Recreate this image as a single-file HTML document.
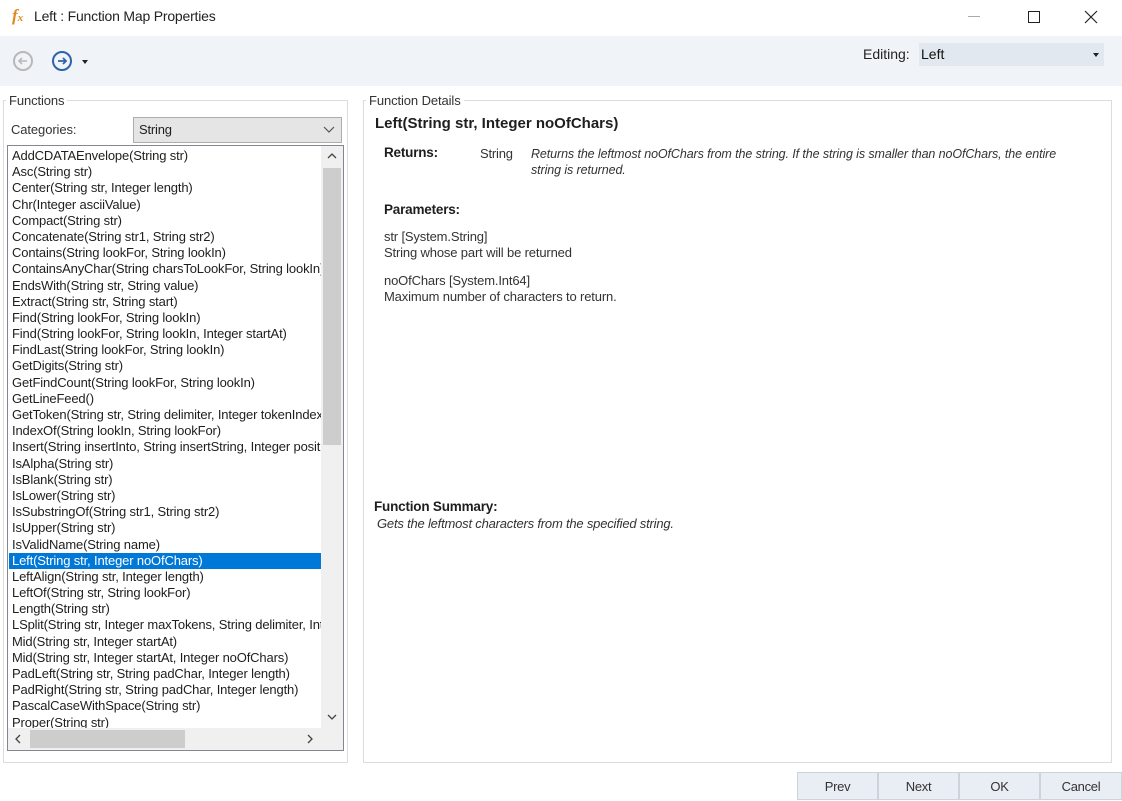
<!DOCTYPE html>
<html><head><meta charset="utf-8"><style>
*{margin:0;padding:0;box-sizing:border-box}
body{width:1122px;height:799px;background:#fff;font-family:"Liberation Sans",sans-serif;font-size:12px;color:#1e1e1e;position:relative;overflow:hidden}
.abs{position:absolute}
.grp{position:absolute;border:1px solid #dcdcdc}
.lbl{position:absolute;background:#fff;padding:0 3px;color:#333;font-size:13px;letter-spacing:-.1px}
.list div{height:16.2px;line-height:16px;padding-left:3px;white-space:nowrap;letter-spacing:-.15px;font-size:13px}
.sel{background:#0078d7;color:#fff;width:312px}
.btn{position:absolute;top:772px;height:28px;width:81px;background:#e9eef4;border:1px solid #ccd3db;text-align:center;line-height:28px;font-size:13px;color:#333;letter-spacing:-.3px}
</style></head><body>
<div class="abs" style="left:12px;top:6px;font-family:'Liberation Serif',serif;font-style:italic;font-weight:bold;color:#e08a1e;font-size:17px">f<span style="font-size:11px">x</span></div>
<div class="abs" style="left:34px;top:8px;font-size:14px;color:#222;letter-spacing:-.2px">Left : Function Map Properties</div>
<div class="abs" style="left:968px;top:16px;width:12px;height:1px;background:#aaa"></div>
<div class="abs" style="left:1028px;top:11px;width:12px;height:12px;border:1px solid #222"></div>
<svg class="abs" style="left:1084px;top:10px" width="14" height="14"><path d="M1 1L13 13M13 1L1 13" stroke="#222" stroke-width="1.2"/></svg>
<div class="abs" style="left:0;top:36px;width:1122px;height:50px;background:#f0f4f8"></div>
<svg class="abs" style="left:12px;top:50px" width="22" height="22"><circle cx="11" cy="11" r="9" fill="none" stroke="#b8b8b8" stroke-width="2"/><path d="M15 11H7M10 8L7 11L10 14" fill="none" stroke="#b8b8b8" stroke-width="1.6"/></svg>
<svg class="abs" style="left:51px;top:50px" width="22" height="22"><circle cx="11" cy="11" r="9" fill="none" stroke="#2f62a8" stroke-width="2"/><path d="M7 11H15M12 8L15 11L12 14" fill="none" stroke="#2f62a8" stroke-width="1.8"/></svg>
<div class="abs" style="left:82px;top:60px;border:3px solid transparent;border-top:4px solid #222"></div>
<div class="abs" style="left:863px;top:46px;font-size:14px;color:#222">Editing:</div>
<div class="abs" style="left:919px;top:43px;width:185px;height:23px;background:#e1e8f0;font-size:14px;line-height:22px;padding-left:2px;color:#111">Left</div>
<div class="abs" style="left:1093px;top:53px;border:3px solid transparent;border-top:4px solid #222"></div>

<div class="grp" style="left:3px;top:100px;width:345px;height:663px"></div>
<div class="lbl" style="left:6px;top:93px">Functions</div>
<div class="abs" style="left:11px;top:122px;font-size:13px;color:#333;letter-spacing:-.1px">Categories:</div>
<div class="abs" style="left:133px;top:117px;width:209px;height:26px;background:#e5e5e5;border:1px solid #adadad;font-size:13px;line-height:24px;padding-left:5px;letter-spacing:-.2px">String</div>
<svg class="abs" style="left:323px;top:126px" width="12" height="8"><path d="M1 1L6 6L11 1" fill="none" stroke="#555" stroke-width="1.2"/></svg>
<div class="abs" style="left:7px;top:145px;width:337px;height:606px;border:1px solid #828790;background:#fff;overflow:hidden">
<div class="list abs" style="left:1px;top:2px;width:312px;height:580px;overflow:hidden">
<div>AddCDATAEnvelope(String str)</div><div>Asc(String str)</div><div>Center(String str, Integer length)</div><div>Chr(Integer asciiValue)</div><div>Compact(String str)</div><div>Concatenate(String str1, String str2)</div><div>Contains(String lookFor, String lookIn)</div><div>ContainsAnyChar(String charsToLookFor, String lookIn)</div><div>EndsWith(String str, String value)</div><div>Extract(String str, String start)</div><div>Find(String lookFor, String lookIn)</div><div>Find(String lookFor, String lookIn, Integer startAt)</div><div>FindLast(String lookFor, String lookIn)</div><div>GetDigits(String str)</div><div>GetFindCount(String lookFor, String lookIn)</div><div>GetLineFeed()</div><div>GetToken(String str, String delimiter, Integer tokenIndex)</div><div>IndexOf(String lookIn, String lookFor)</div><div>Insert(String insertInto, String insertString, Integer position)</div><div>IsAlpha(String str)</div><div>IsBlank(String str)</div><div>IsLower(String str)</div><div>IsSubstringOf(String str1, String str2)</div><div>IsUpper(String str)</div><div>IsValidName(String name)</div><div class="sel">Left(String str, Integer noOfChars)</div><div>LeftAlign(String str, Integer length)</div><div>LeftOf(String str, String lookFor)</div><div>Length(String str)</div><div>LSplit(String str, Integer maxTokens, String delimiter, Integer)</div><div>Mid(String str, Integer startAt)</div><div>Mid(String str, Integer startAt, Integer noOfChars)</div><div>PadLeft(String str, String padChar, Integer length)</div><div>PadRight(String str, String padChar, Integer length)</div><div>PascalCaseWithSpace(String str)</div><div>Proper(String str)</div>
</div>
<div class="abs" style="left:313px;top:0;width:22px;height:582px;background:#f0f0f0"></div>
<div class="abs" style="left:315px;top:22px;width:18px;height:277px;background:#cdcdcd"></div>
<svg class="abs" style="left:319px;top:7px" width="10" height="6"><path d="M1 5L5 1L9 5" fill="none" stroke="#444" stroke-width="1.3"/></svg>
<svg class="abs" style="left:319px;top:568px" width="10" height="6"><path d="M1 1L5 5L9 1" fill="none" stroke="#444" stroke-width="1.3"/></svg>
<div class="abs" style="left:0;top:582px;width:335px;height:22px;background:#f0f0f0"></div>
<div class="abs" style="left:22px;top:584px;width:155px;height:18px;background:#cdcdcd"></div>
<svg class="abs" style="left:7px;top:588px" width="6" height="10"><path d="M5 1L1 5L5 9" fill="none" stroke="#444" stroke-width="1.3"/></svg>
<svg class="abs" style="left:299px;top:588px" width="6" height="10"><path d="M1 1L5 5L1 9" fill="none" stroke="#444" stroke-width="1.3"/></svg>
</div>

<div class="grp" style="left:363px;top:100px;width:749px;height:663px"></div>
<div class="lbl" style="left:366px;top:93px">Function Details</div>
<div class="abs" style="left:375px;top:115px;font-weight:bold;font-size:15px;letter-spacing:0">Left(String str, Integer noOfChars)</div>
<div class="abs" style="left:384px;top:145px;font-weight:bold;font-size:13.5px;letter-spacing:-.2px">Returns:</div>
<div class="abs" style="left:480px;top:146px;font-size:13px;color:#333;letter-spacing:-.2px">String</div>
<div class="abs" style="left:531px;top:146px;width:562px;font-style:italic;font-size:12.5px;line-height:16px;color:#333;letter-spacing:-.1px">Returns the leftmost noOfChars from the string. If the string is smaller than noOfChars, the entire<br>string is returned.</div>
<div class="abs" style="left:384px;top:202px;font-weight:bold;font-size:13.5px;letter-spacing:-.2px">Parameters:</div>
<div class="abs" style="left:384px;top:229px;font-size:13px;line-height:16px;color:#333;letter-spacing:-.15px">str [System.String]<br>String whose part will be returned</div>
<div class="abs" style="left:384px;top:273px;font-size:13px;line-height:16px;color:#333;letter-spacing:-.15px">noOfChars [System.Int64]<br>Maximum number of characters to return.</div>
<div class="abs" style="left:374px;top:499px;font-weight:bold;font-size:13.5px;letter-spacing:-.2px">Function Summary:</div>
<div class="abs" style="left:377px;top:516px;font-style:italic;font-size:13px;color:#333;letter-spacing:-.2px">Gets the leftmost characters from the specified string.</div>

<div class="btn" style="left:797px">Prev</div>
<div class="btn" style="left:878px">Next</div>
<div class="btn" style="left:959px">OK</div>
<div class="btn" style="left:1040px;width:82px">Cancel</div>
</body></html>
